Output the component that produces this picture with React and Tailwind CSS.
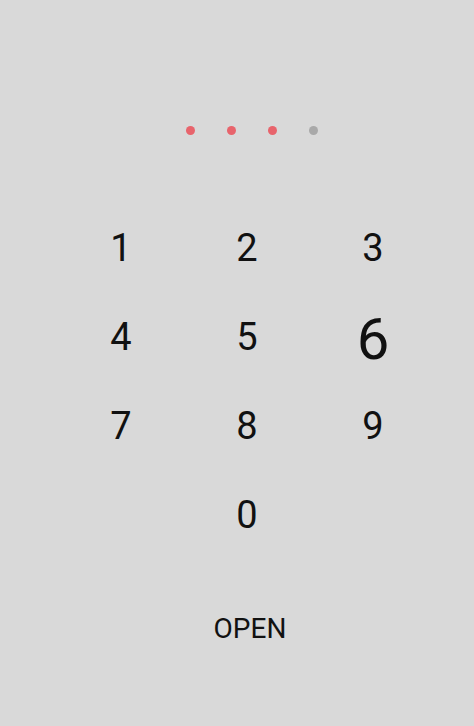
import { useState } from 'react'

const KEYS = ['1', '2', '3', '4', '5', '6', '7', '8', '9', '', '0', '']

export default function App() {
  const [code] = useState('336')
  const pressed = '6'

  return (
    <div
      className="w-[474px] h-[726px] bg-[#d9d9d9] flex flex-col items-center pl-[26px] text-[#111]"
      style={{ fontFamily: 'Roboto, "Noto Sans", sans-serif' }}
    >
      {/* pin indicator */}
      <div className="flex gap-[32px] pt-[126px] ml-[4px]">
        {[0, 1, 2, 3].map((i) => (
          <span
            key={i}
            className={`w-[9px] h-[9px] rounded-full ${
              i < code.length ? 'bg-[#e8646c]' : 'bg-[#a9a9a9]'
            }`}
          />
        ))}
      </div>

      {/* keypad */}
      <div className="grid grid-cols-3 w-[378px] mt-[68px] ml-[-6px]">
        {KEYS.map((k, i) => (
          <div key={i} className="h-[89px] flex items-center justify-center">
            {k && (
              <span
                className={`leading-none ${
                  k === pressed ? 'text-[58px] mt-[4px]' : 'text-[38px]'
                }`}
              >
                {k}
              </span>
            )}
          </div>
        ))}
      </div>

      <button className="mt-[56px] text-[28px] leading-none">OPEN</button>
    </div>
  )
}
